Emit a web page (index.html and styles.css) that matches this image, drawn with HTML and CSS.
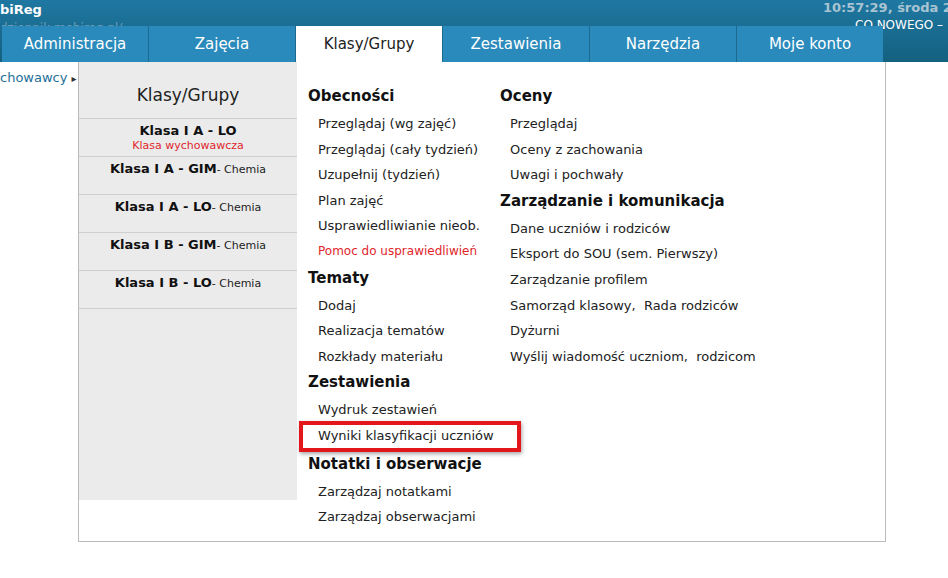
FILE: index.html
```html
<!DOCTYPE html>
<html lang="pl">
  <head>
    <meta charset="UTF-8" />
    <title>MobiReg - Klasy/Grupy</title>
    <link rel="stylesheet" href="styles.css">
  </head>
  <body>
    <header class="top">
      <div class="brand">
        <div class="brand-name">biReg</div>
        <div class="brand-url">dziennik.mobireg.pl/</div>
      </div>
      <div class="clock">
        <div class="clock-time">10:57:29, środa 2</div>
        <div class="clock-news">CO NOWEGO –</div>
      </div>
      <nav class="tabs">
        <a class="tab">Administracja</a>
        <a class="tab">Zajęcia</a>
        <a class="tab active">Klasy/Grupy</a>
        <a class="tab">Zestawienia</a>
        <a class="tab">Narzędzia</a>
        <a class="tab">Moje konto</a>
      </nav>
    </header>

    <main class="content">
      <div class="crumb">chowawcy <span class="crumb-arrow">&#9656;</span></div>

      <!-- dropdown of the active tab -->
      <div class="dropdown">
        <aside class="groups">
          <div class="groups-title">Klasy/Grupy</div>
          <div class="group">
            <b>Klasa I A - LO</b>
            <div class="group-note">Klasa wychowawcza</div>
          </div>
          <div class="group"><b>Klasa I A - GIM</b><span class="subject">- Chemia</span></div>
          <div class="group"><b>Klasa I A - LO</b><span class="subject">- Chemia</span></div>
          <div class="group"><b>Klasa I B - GIM</b><span class="subject">- Chemia</span></div>
          <div class="group"><b>Klasa I B - LO</b><span class="subject">- Chemia</span></div>
        </aside>

        <section class="menu-col">
          <h3>Obecności</h3>
          <a>Przeglądaj (wg zajęć)</a>
          <a>Przeglądaj (cały tydzień)</a>
          <a>Uzupełnij (tydzień)</a>
          <a>Plan zajęć</a>
          <a>Usprawiedliwianie nieob.</a>
          <a class="help">Pomoc do usprawiedliwień</a>
          <h3>Tematy</h3>
          <a>Dodaj</a>
          <a>Realizacja tematów</a>
          <a>Rozkłady materiału</a>
          <h3>Zestawienia</h3>
          <a>Wydruk zestawień</a>
          <a class="marked">Wyniki klasyfikacji uczniów</a>
          <h3 class="tall">Notatki i obserwacje</h3>
          <a>Zarządzaj notatkami</a>
          <a>Zarządzaj obserwacjami</a>
        </section>

        <section class="menu-col wide">
          <h3>Oceny</h3>
          <a>Przeglądaj</a>
          <a>Oceny z zachowania</a>
          <a>Uwagi i pochwały</a>
          <h3>Zarządzanie i komunikacja</h3>
          <a>Dane uczniów i rodziców</a>
          <a>Eksport do SOU (sem. Pierwszy)</a>
          <a>Zarządzanie profilem</a>
          <a>Samorząd klasowy, &nbsp;Rada rodziców</a>
          <a>Dyżurni</a>
          <a>Wyślij wiadomość uczniom, &nbsp;rodzicom</a>
        </section>
      </div>
    </main>
  </body>
</html>
```

FILE: styles.css
```css
html {
  font-family: "DejaVu Sans", Verdana, sans-serif;
  font-size: 13px;
  color: #222222;
  background: #ffffff;
}

body {
  margin: 0;
  width: 948px;
  height: 578px;
  overflow: hidden;
}

a {
  cursor: pointer;
}

/* header */
.top {
  position: relative;
  height: 62px;
  background: linear-gradient(#1f78a2, #14607f);
}
.brand {
  height: 26px;
  overflow: hidden;
}
.brand-name {
  color: #ffffff;
  font-weight: bold;
  font-size: 13px;
  line-height: 14px;
  padding-top: 3px;
}
.brand-url {
  color: #6e9db4;
  font-size: 12px;
  line-height: 14px;
  padding-top: 4px;
}
.clock {
  position: absolute;
  top: 0;
  left: 823px;
  white-space: nowrap;
}
.clock-time {
  color: #a9c4d2;
  font-weight: bold;
  font-size: 13px;
  line-height: 14px;
  padding-top: 1px;
}
.clock-news {
  color: #ffffff;
  font-size: 12px;
  line-height: 14px;
  padding: 3px 0 0 32px;
}

/* tabs */
.tabs {
  position: relative;
  display: flex;
  margin-left: 2px;
  height: 36px;
}
.tab {
  width: 146px;
  border-right: 1px solid #1b6a8f;
  background: #2a8abb;
  color: #ffffff;
  font-size: 15px;
  line-height: 36px;
  text-align: center;
}
.tab:last-child {
  border-right: 0;
}
.tab.active {
  background: #ffffff;
  color: #222222;
}

/* content */
.content {
  position: relative;
}
.crumb {
  color: #1f6f99;
  font-size: 13px;
  padding-top: 8px;
}
.crumb-arrow {
  color: #333333;
  font-size: 10px;
}

/* dropdown */
.dropdown {
  position: absolute;
  top: 0;
  left: 78px;
  width: 806px;
  height: 479px;
  display: flex;
  background: #ffffff;
  border: 1px solid #bbbbbb;
  border-top: 0;
}
.groups {
  width: 218px;
  height: 438px;
  background: #ebebeb;
  text-align: center;
}
.groups-title {
  height: 56px;
  line-height: 66px;
  font-size: 17px;
  color: #222222;
}
.group {
  border-top: 1px solid #cfcfcf;
  padding-top: 4px;
  box-sizing: border-box;
  height: 38px;
  font-size: 12px;
  line-height: 16px;
}
.group:last-child {
  border-bottom: 1px solid #cfcfcf;
  height: 39px;
}
.group b {
  font-size: 13px;
  color: #111111;
}
.group-note {
  color: #e0262b;
  font-size: 11px;
  line-height: 14px;
}
.subject {
  font-size: 11px;
  color: #222222;
}

.menu-col {
  display: flex;
  flex-direction: column;
  align-items: flex-start;
  padding: 21px 0 0 11px;
  width: 181px;
}
.menu-col.wide {
  flex: 1;
}
.menu-col h3 {
  margin: 0;
  font-size: 15px;
  line-height: 26px;
  color: #111111;
  white-space: nowrap;
}
.menu-col h3.tall {
  margin-top: 2px;
}
.menu-col a {
  position: relative;
  padding-left: 10px;
  line-height: 25.6px;
  white-space: nowrap;
}
.menu-col h3 + a {
  margin-top: 2px;
}
.menu-col a.help {
  color: #e0262b;
  font-size: 12px;
}
.menu-col a.marked::after {
  content: "";
  position: absolute;
  top: -2px;
  bottom: -3px;
  left: -9px;
  right: -27px;
  border: 4px solid #e3161b;
  box-shadow: 1px 2px 4px rgba(0, 0, 0, 0.35);
}
```
